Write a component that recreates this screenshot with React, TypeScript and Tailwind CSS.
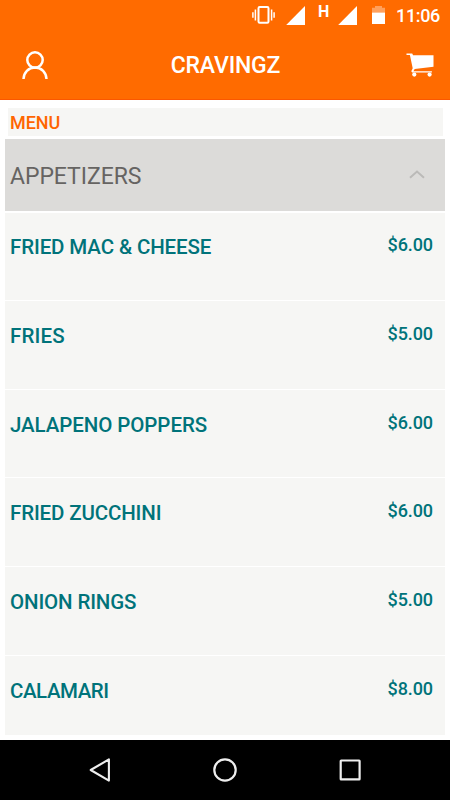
const items = [
  { name: "FRIED MAC & CHEESE", price: "$6.00", tracking: "tracking-[-0.12px]" },
  { name: "FRIES", price: "$5.00", tracking: "tracking-[0.15px]" },
  { name: "JALAPENO POPPERS", price: "$6.00", tracking: "tracking-[-0.08px]" },
  { name: "FRIED ZUCCHINI", price: "$6.00", tracking: "tracking-[-0.14px]" },
  { name: "ONION RINGS", price: "$5.00", tracking: "tracking-[-0.14px]" },
  { name: "CALAMARI", price: "$8.00", tracking: "tracking-[-0.45px]" },
];

function StatusBar() {
  return (
    <div className="flex h-[30px] items-start justify-end pr-[10px]">
      <svg className="h-[30px] w-[24px]" viewBox="0 0 24 30" fill="none" stroke="white" strokeWidth="1.5">
        <rect x="6.5" y="7.1" width="10" height="15.6" rx="1.2" strokeWidth="2" />
        <path d="M3.4 9.5v11M.9 12.3v5.4M19.6 9.5v11M22.1 12.3v5.4" />
      </svg>
      <svg className="ml-[10px] h-[30px] w-[20px]" viewBox="0 0 20 30" fill="white">
        <path d="M.2 24.9 19 6v18.9z" />
      </svg>
      <span className="ml-[12px] mt-[3px] w-[11px] text-[16px] font-bold leading-[17px]">H</span>
      <svg className="ml-[9px] h-[30px] w-[20px]" viewBox="0 0 20 30" fill="white">
        <path d="M.2 24.9 19 6v18.9z" />
      </svg>
      <svg className="ml-[13px] h-[30px] w-[15px]" viewBox="0 0 15 30" fill="white">
        <path d="M1 12.5V7.8h3V6.1h7v1.7h3v4.7z" opacity=".36" />
        <path d="M1 12.5h13V24H1z" />
      </svg>
      <span className="ml-[10px] mt-[5px] w-[44px] whitespace-nowrap text-[18px] font-medium leading-[22px] tracking-[-0.35px]">
        11:06
      </span>
    </div>
  );
}

function AppBar() {
  return (
    <div className="flex h-[70px] items-center justify-between border-b border-[#fb5700] pl-[21px] pr-[15px]">
      <svg className="h-[70px] w-[28px]" viewBox="0 0 28 70" fill="none" stroke="white" strokeWidth="2.5">
        <circle cx="14" cy="30" r="7.7" />
        <path d="M2.500 49c.2-6.500 5-11.500 11.500-11.500s11.300 5 11.500 11.500" />
      </svg>
      <h1 className="mr-[4px] pt-[3px] text-[23px] font-medium leading-[30px] tracking-[-0.2px]">CRAVINGZ</h1>
      <svg className="h-[70px] w-[29px]" viewBox="0 0 29 70" fill="white">
        <path d="M.5 23.400h5.700l.9 1.800h20.400v11.600L8.700 38.900l-1.300 2.300h18.500v1.200H6.100l-.8-1.200 1.400-2.900L3.900 25H.5z" />
        <circle cx="8.300" cy="44.600" r="2.100" />
        <circle cx="23.600" cy="44.600" r="2.100" />
      </svg>
    </div>
  );
}

function NavigationBar() {
  return (
    <nav className="flex h-[60px] items-center justify-center gap-[101px] bg-black">
      <svg className="size-[24px]" viewBox="0 0 24 24" fill="none" stroke="#eee" strokeWidth="2.1" strokeLinejoin="round">
        <path d="M2.700 12 20.900 1.400v21.200z" />
      </svg>
      <svg className="size-[24px]" viewBox="0 0 24 24" fill="none" stroke="#eee" strokeWidth="2.2">
        <circle cx="12" cy="12" r="10.7" />
      </svg>
      <svg className="size-[24px]" viewBox="0 0 24 24" fill="none" stroke="#eee" strokeWidth="2.2">
        <rect x="2.7" y="2.5" width="18.9" height="18.9" rx=".5" />
      </svg>
    </nav>
  );
}

export default function App() {
  return (
    <div className="flex h-[800px] w-[450px] flex-col overflow-hidden bg-white font-[Roboto,sans-serif]">
      <header className="h-[100px] shrink-0 bg-[#ff6b00] text-white">
        <StatusBar />
        <AppBar />
      </header>
      <main className="flex h-[640px] shrink-0 flex-col px-[5px] pb-[5px] pt-[8px]">
        <div className="mx-[2.5px] flex h-[28px] items-center bg-[#f6f6f4] pl-[2.5px] pt-px text-[18px] font-medium leading-[28px] tracking-[-0.1px] text-[#ff6500]">
          MENU
        </div>
        <section className="mt-[3px] flex min-h-0 flex-1 flex-col">
          <button className="flex h-[72px] shrink-0 items-center justify-between bg-[#dcdbd9] pl-[5px] pr-[20px] text-[23px] tracking-[-0.05px] text-[#666462]">
            <span className="pt-[4px]">APPETIZERS</span>
            <svg className="h-[10px] w-[16px]" viewBox="0 0 16 10" fill="none" stroke="#bbbab8" strokeWidth="2">
              <path d="M1 7.7 8 1.5l7 6.2" />
            </svg>
          </button>
          <ul className="mt-[2px] min-h-0 flex-1 overflow-hidden bg-[#f6f6f4]">
            {items.map((item) => (
              <li
                key={item.name}
                className="flex h-[88.75px] items-start justify-between border-b border-white pl-[5px] pr-[12px] pt-[20px] font-medium text-[#00737a] first:-mt-px"
              >
                <span className={`pt-px text-[20.5px] leading-[28px] ${item.tracking}`}>{item.name}</span>
                <span className="text-[18px] leading-[25px] tracking-[-0.1px]">{item.price}</span>
              </li>
            ))}
          </ul>
        </section>
      </main>
      <NavigationBar />
    </div>
  );
}
